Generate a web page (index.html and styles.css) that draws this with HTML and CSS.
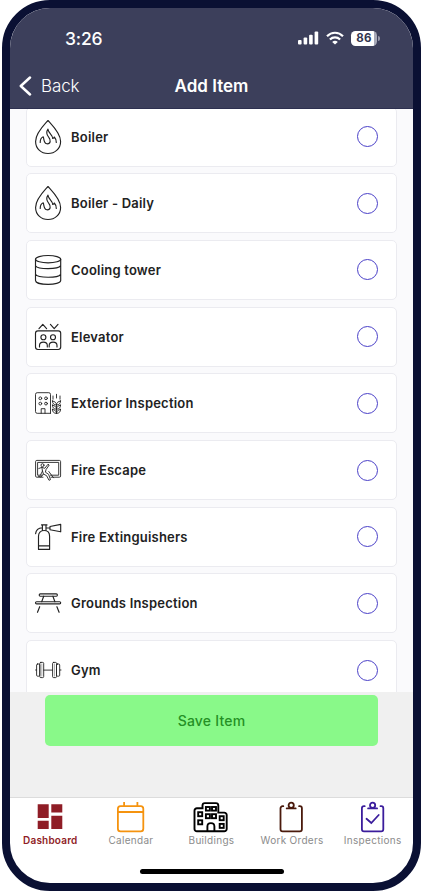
FILE: index.html
```
<!DOCTYPE html>
<html lang="en">
<head>
  <meta charset="UTF-8" />
  <meta name="viewport" content="width=device-width, initial-scale=1.0"/>
  <title>Add Item</title>
  <link rel="stylesheet" href="styles.css">
</head>
<body>
<div class="phone">

  <header class="top">
    <div class="status">
      <span class="time">3:26</span>
      <div class="status-icons">
        <svg class="signal" width="21" height="14" viewBox="0 0 21 14" fill="#fff">
          <rect x="0" y="9" width="3.6" height="4.5" rx="1"/>
          <rect x="5.6" y="6.6" width="3.6" height="6.9" rx="1"/>
          <rect x="11.1" y="3.8" width="3.6" height="9.7" rx="1"/>
          <rect x="16.6" y="0.6" width="3.6" height="12.9" rx="1"/>
        </svg>
        <svg class="wifi" width="18" height="14" viewBox="0 0 18 14" fill="none" stroke="#fff" stroke-width="2.2">
          <path d="M1 5.2C5.5 .6 12.5 .6 17 5.2"/>
          <path d="M3.9 8.5C6.8 5.6 11.2 5.6 14.1 8.5"/>
          <path d="M9 13.6L6.2 10.9C7.8 9.4 10.2 9.4 11.8 10.9Z" fill="#fff" stroke="none"/>
        </svg>
        <div class="battery"><span>86</span></div>
      </div>
    </div>
    <div class="nav">
      <a class="back" href="#">
        <svg width="13" height="20" viewBox="0 0 13 20" fill="none" stroke="#fff" stroke-width="2.5" stroke-linecap="round" stroke-linejoin="round"><path d="M11 1.5L1.8 10L11 18.5"/></svg>
        Back
      </a>
      <h1>Add Item</h1>
    </div>
  </header>

  <main class="list">
    <div class="item">
      <svg class="icon" viewBox="0 0 28 36"><path d="M14 1.5C10.5 5.5 1.6 14 1.6 22.4C1.6 29.5 7 34.5 14 34.5S26.6 29.5 26.6 22.4C26.6 14 17.5 5.5 14 1.5Z"/><path d="M6.2 23.5C6.2 20.5 7.5 18.5 9.2 17.8C10.2 19.5 9.3 24.6 13 24.8C16.8 25 17 21 14.8 18.3C12.3 15.5 12 13 14 10.2C14.5 14.5 18.8 16 18.7 19.5C19.5 19.3 20 18.8 20.3 18C21.8 19.5 22.3 21 22.3 23.5"/></svg>
      <span class="name">Boiler</span><span class="radio"></span>
    </div>
    <div class="item">
      <svg class="icon" viewBox="0 0 28 36"><path d="M14 1.5C10.5 5.5 1.6 14 1.6 22.4C1.6 29.5 7 34.5 14 34.5S26.6 29.5 26.6 22.4C26.6 14 17.5 5.5 14 1.5Z"/><path d="M6.2 23.5C6.2 20.5 7.5 18.5 9.2 17.8C10.2 19.5 9.3 24.6 13 24.8C16.8 25 17 21 14.8 18.3C12.3 15.5 12 13 14 10.2C14.5 14.5 18.8 16 18.7 19.5C19.5 19.3 20 18.8 20.3 18C21.8 19.5 22.3 21 22.3 23.5"/></svg>
      <span class="name">Boiler - Daily</span><span class="radio"></span>
    </div>
    <div class="item">
      <svg class="icon" viewBox="0 0 28 36"><ellipse cx="14.1" cy="7.2" rx="12.6" ry="3.7"/><path d="M1.5 7.2V28.4C1.5 33.7 26.7 33.7 26.7 28.4V7.2M1.5 13.7C4 17.6 24 17.6 26.7 13.7M1.5 22.3C4 26.2 24 26.2 26.7 22.3"/></svg>
      <span class="name">Cooling tower</span><span class="radio"></span>
    </div>
    <div class="item">
      <svg class="icon" viewBox="0 0 28 36"><path d="M5 9.7L8.8 5.4L12.6 9.7M16.4 5.4L20.2 9.7L24 5.4"/><rect x="1.5" y="11.9" width="25.2" height="18.6" rx="2.4"/><circle cx="9.4" cy="18.2" r="2.5"/><circle cx="19" cy="18.2" r="2.5"/><path d="M5.5 28V26.5C5.5 21.9 13.3 21.9 13.3 26.5V28M15.2 28V26.5C15.2 21.9 23 21.9 23 26.5V28"/></svg>
      <span class="name">Elevator</span><span class="radio"></span>
    </div>
    <div class="item">
      <svg class="icon thin" viewBox="0 0 28 36"><path d="M16.5 28.3H3.2A1.7 1.7 0 0 1 1.5 26.6V9.4A1.7 1.7 0 0 1 3.2 7.7H14.8A1.7 1.7 0 0 1 16.5 9.4V28.3M7.2 28.3V23.7H11V28.3"/><circle cx="6.3" cy="13.3" r="1.4"/><circle cx="12" cy="13.3" r="1.4"/><circle cx="6.3" cy="18.6" r="1.4"/><circle cx="12" cy="18.6" r="1.4"/><path d="M19 11V14.2M22.5 9.3V13M26 11V14.2M22.5 20V28.4M18.4 16C21 16.4 22.5 17.8 22.5 20C20 20 18.4 18.6 18.4 16ZM26.6 16C24 16.4 22.5 17.8 22.5 20C25 20 26.6 18.6 26.6 16ZM18.4 20.2C21 20.6 22.5 22 22.5 24.2C20 24.2 18.4 22.8 18.4 20.2ZM26.6 20.2C24 20.6 22.5 22 22.5 24.2C25 24.2 26.6 22.8 26.6 20.2ZM18.4 24.4C21 24.8 22.5 26.2 22.5 28.4C20 28.4 18.4 27 18.4 24.4ZM26.6 24.4C24 24.8 22.5 26.2 22.5 28.4C25 28.4 26.6 27 26.6 24.4Z"/></svg>
      <span class="name">Exterior Inspection</span><span class="radio"></span>
    </div>
    <div class="item">
      <svg class="icon thin" viewBox="0 0 28 36"><path d="M9 25.2H2.8A1.2 1.2 0 0 1 1.6 24V9.6A1.2 1.2 0 0 1 2.8 8.4H25.4A1.2 1.2 0 0 1 26.6 9.6V24A1.2 1.2 0 0 1 25.4 25.2H17"/><path d="M8 23.2H3.6V10.4H24.7V23.2H16.5"/><circle cx="8.5" cy="13.2" r="1.5"/><path d="M4.8 16.5L7.8 15.4L10.8 16.3L14 12.2L15.2 13L12 17.6L11.4 20.2L14.6 22.3L16.5 27.6L15 28.3L12.6 23.7L9.4 22L7 25L4.4 24.3M7.8 15.4L8.5 19L6.5 23M9.4 22L8.5 19M14.8 19.5L19.5 25.8"/></svg>
      <span class="name">Fire Escape</span><span class="radio"></span>
    </div>
    <div class="item">
      <svg class="icon" viewBox="0 0 28 36"><path d="M4.5 30.4V17.2C4.5 13.8 6.5 11.5 10.1 11.5S15.6 13.8 15.6 17.2V30.4ZM4.5 26.8H15.6M8.4 11.5V5.9H12V11.5M7.5 5.9H13M8.4 8.7C4.5 9 2 11 1.6 14.6M12 9H16M16 7.5L26.7 5.4V12.8L16 10.8Z"/></svg>
      <span class="name">Fire Extinguishers</span><span class="radio"></span>
    </div>
    <div class="item">
      <svg class="icon" viewBox="0 0 28 36"><rect x="5.2" y="8.9" width="18.2" height="2.3" rx="1.1"/><rect x="1.5" y="16.7" width="25.2" height="2.2" rx="1.1"/><path d="M9.7 11.2L7.7 16.7M18.9 11.2L20.9 16.7M5.7 21.7L3.5 27.3M22.9 21.7L25.1 27.3"/></svg>
      <span class="name">Grounds Inspection</span><span class="radio"></span>
    </div>
    <div class="item">
      <svg class="icon thin" viewBox="0 0 28 36"><path d="M1.6 18H2.6M26 18H27M9.7 18.1H18.6"/><rect x="2.6" y="12" width="3.2" height="12.2" rx="1"/><rect x="5.8" y="10.4" width="3.9" height="15.2" rx="1"/><rect x="18.6" y="10.4" width="3.9" height="15.2" rx="1"/><rect x="22.5" y="12" width="3.2" height="12.2" rx="1"/><path d="M7.8 12V24M20.5 12V24" opacity=".4"/></svg>
      <span class="name">Gym</span><span class="radio"></span>
    </div>
  </main>

  <div class="actions">
    <button class="save">Save Item</button>
  </div>

  <nav class="tabs">
    <a class="tab active" href="#">
      <svg viewBox="0 0 36 32" fill="#8f1d26"><path d="M5.7 3.3h11V17h-11zM5.7 19.7h11V28h-11zM19.3 3.3h11v8.3h-11zM19.3 14.7h11V28h-11z"/></svg>
      Dashboard
    </a>
    <a class="tab" href="#">
      <svg viewBox="0 0 36 32" fill="none" stroke="#f5930f" stroke-width="1.8"><rect x="4.9" y="5.1" width="25.4" height="25.2" rx="2.6"/><path d="M4.9 11H30.3M11.1 1V5M24.4 1V5"/></svg>
      Calendar
    </a>
    <a class="tab" href="#">
      <svg viewBox="0 0 36 32" fill="none" stroke="#000" stroke-width="1.9"><path d="M9.5 7.3V4.5A2.4 2.4 0 0 1 11.9 2.1H22.9A2.4 2.4 0 0 1 25.3 4.5V11.6H31.3A2.4 2.4 0 0 1 33.7 14V27.9A2.4 2.4 0 0 1 31.3 30.3H3.9A2.4 2.4 0 0 1 1.5 27.9V9.7A2.4 2.4 0 0 1 3.9 7.3H10.5"/><rect x="5.2" y="11.2" width="4" height="4"/><rect x="5.2" y="19.3" width="4" height="4"/><rect x="12.9" y="6" width="4" height="3.6"/><rect x="19" y="6" width="4" height="3.6"/><rect x="12.9" y="13.2" width="4" height="4"/><rect x="19" y="13.2" width="4" height="4"/><rect x="26.7" y="15.2" width="4" height="4"/><rect x="26.7" y="22.9" width="4" height="4"/><path d="M14.4 30.3V25.5C14.4 21 21.4 21 21.4 25.5V30.3"/></svg>
      Buildings
    </a>
    <a class="tab" href="#">
      <svg viewBox="0 0 36 32" fill="none" stroke="#4a1a0c" stroke-width="1.8" stroke-linecap="round"><path d="M9.3 5.2H8.6A2.1 2.1 0 0 0 6.5 7.3V28.2A2.1 2.1 0 0 0 8.6 30.3H25.8A2.1 2.1 0 0 0 27.9 28.2V7.3A2.1 2.1 0 0 0 25.8 5.2H25.1M12.7 7.4H21.7"/><circle cx="17.2" cy="4.2" r="2.6"/></svg>
      Work Orders
    </a>
    <a class="tab" href="#">
      <svg viewBox="0 0 36 32" fill="none" stroke="#3b1d9c" stroke-width="1.8" stroke-linecap="round"><path d="M9.7 5.2H9A2.1 2.1 0 0 0 6.9 7.3V28.2A2.1 2.1 0 0 0 9 30.3H26.2A2.1 2.1 0 0 0 28.3 28.2V7.3A2.1 2.1 0 0 0 26.2 5.2H25.5M13.1 7.4H22.1M11.5 17.8L16.3 22L23.7 14"/><circle cx="17.6" cy="4.2" r="2.6"/></svg>
      Inspections
    </a>
  </nav>
  <div class="home"></div>

</div>
</body>
</html>
```

FILE: styles.css
```
* { box-sizing: border-box; }
body { margin: 0; background: #fff; font-family: Inter, "Liberation Sans", sans-serif; overflow: hidden; }
a { text-decoration: none; color: inherit; }
svg { display: block; }

.phone { display: flex; flex-direction: column; width: 419px; height: 891px; margin-left: 2px; border: 8px solid #0a1033; border-radius: 48px; background: #fff; overflow: hidden; }

/* header */
.top { flex: none; height: 101px; background: #3c3f5b; color: #fff; border-bottom: 1px solid #2d3050; }
.status { display: flex; justify-content: space-between; align-items: center; height: 60px; padding: 0 36px 0 55px; }
.time { font-size: 17.5px; font-weight: 500; letter-spacing: -.2px; }
.status-icons { display: flex; align-items: center; gap: 7px; }
.battery { display: flex; align-items: center; justify-content: center; position: relative; width: 26px; height: 15px; border-radius: 4.5px; background: linear-gradient(90deg, #fff 88%, #a7a9b8 88%); color: #333650; font-size: 11.5px; font-weight: 700; letter-spacing: .3px; }
.battery::after { content: ""; position: absolute; right: -3px; top: 5px; width: 2px; height: 5px; border-radius: 0 2px 2px 0; background: #9698aa; }
.nav { display: grid; grid-template-columns: 1fr auto 1fr; align-items: center; height: 36px; padding: 0 9px; }
.back { display: flex; align-items: center; gap: 9px; font-size: 17px; font-weight: 300; letter-spacing: -.1px; }
h1 { margin: 0; font-size: 17px; font-weight: 600; }

/* list */
.list { flex: none; display: flex; flex-direction: column; gap: 6.7px; height: 583px; padding: 0 16px; background: #fafafc; overflow: hidden; }
.item { flex: none; display: flex; align-items: center; height: 60px; padding: 0 18px 0 7px; background: #fff; border: 1px solid #ebebf0; border-radius: 5px; }
.item:first-child { margin-top: -2.4px; }
.icon { width: 28px; height: 36px; margin-right: 9px; fill: none; stroke: #222; stroke-width: 1.15; stroke-linecap: round; stroke-linejoin: round; }
.thin { stroke-width: .9; }
.name { flex: 1; font-size: 13px; font-weight: 600; color: #222; letter-spacing: .21px; }
.radio { width: 21px; height: 21px; border: 1px solid #4a40c8; border-radius: 50%; }

/* save button */
.actions { flex: none; height: 105px; padding: 3px 35px; background: #f0f0f0; }
.save { display: block; width: 100%; height: 51px; border: 0; border-radius: 5px; background: #89f989; color: #259025; font-family: inherit; font-size: 14px; font-weight: 500; letter-spacing: .2px; }

/* bottom tabs */
.tabs { flex: none; display: flex; height: 54px; padding-top: 3px; border-top: 1px solid #dcdcdc; }
.tab { flex: 1; display: flex; flex-direction: column; align-items: center; font-size: 10px; line-height: 14px; letter-spacing: .3px; color: #8b8b8b; white-space: nowrap; }
.tab svg { width: 36px; height: 32px; }
.active { color: #8f1d26; font-weight: 600; letter-spacing: .2px; }
.home { width: 144px; height: 5px; margin: 18px auto 0; border-radius: 3px; background: #000; }
```
